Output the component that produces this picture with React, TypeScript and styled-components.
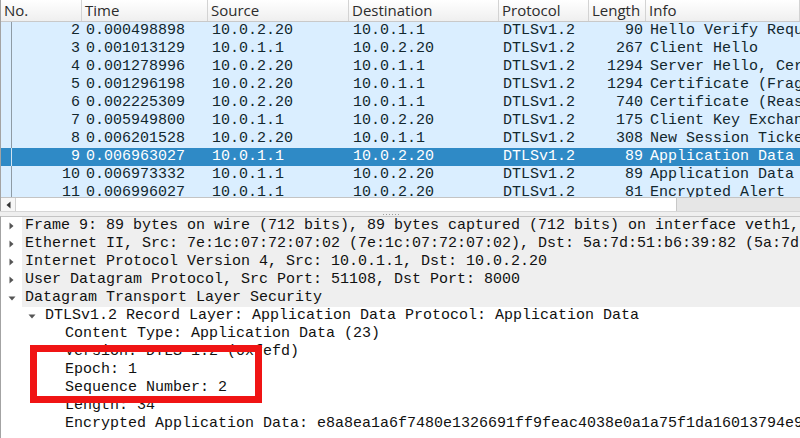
import { FC } from "react";
import { createGlobalStyle, styled } from "styled-components";

const MONO = `"Liberation Mono", "DejaVu Sans Mono", monospace`;
const SANS = `"Open Sans", "Noto Sans", sans-serif`;

interface Packet {
  no: number;
  time: string;
  src: string;
  dst: string;
  proto: string;
  len: number;
  info: string;
}

interface TreeItem {
  level: number;
  text: string;
  twisty?: "open" | "closed";
  shaded?: boolean;
}

const packets: Packet[] = [
  { no: 2, time: "0.000498898", src: "10.0.2.20", dst: "10.0.1.1", proto: "DTLSv1.2", len: 90, info: "Hello Verify Request" },
  { no: 3, time: "0.001013129", src: "10.0.1.1", dst: "10.0.2.20", proto: "DTLSv1.2", len: 267, info: "Client Hello" },
  { no: 4, time: "0.001278996", src: "10.0.2.20", dst: "10.0.1.1", proto: "DTLSv1.2", len: 1294, info: "Server Hello, Certificate" },
  { no: 5, time: "0.001296198", src: "10.0.2.20", dst: "10.0.1.1", proto: "DTLSv1.2", len: 1294, info: "Certificate (Fragment)" },
  { no: 6, time: "0.002225309", src: "10.0.2.20", dst: "10.0.1.1", proto: "DTLSv1.2", len: 740, info: "Certificate (Reassembled)" },
  { no: 7, time: "0.005949800", src: "10.0.1.1", dst: "10.0.2.20", proto: "DTLSv1.2", len: 175, info: "Client Key Exchange" },
  { no: 8, time: "0.006201528", src: "10.0.2.20", dst: "10.0.1.1", proto: "DTLSv1.2", len: 308, info: "New Session Ticket" },
  { no: 9, time: "0.006963027", src: "10.0.1.1", dst: "10.0.2.20", proto: "DTLSv1.2", len: 89, info: "Application Data" },
  { no: 10, time: "0.006973332", src: "10.0.1.1", dst: "10.0.2.20", proto: "DTLSv1.2", len: 89, info: "Application Data" },
  { no: 11, time: "0.006996027", src: "10.0.1.1", dst: "10.0.2.20", proto: "DTLSv1.2", len: 81, info: "Encrypted Alert" },
];

const tree: TreeItem[] = [
  { level: 0, twisty: "closed", shaded: true, text: "Frame 9: 89 bytes on wire (712 bits), 89 bytes captured (712 bits) on interface veth1, id 0" },
  { level: 0, twisty: "closed", shaded: true, text: "Ethernet II, Src: 7e:1c:07:72:07:02 (7e:1c:07:72:07:02), Dst: 5a:7d:51:b6:39:82 (5a:7d:51:b6:39:82)" },
  { level: 0, twisty: "closed", shaded: true, text: "Internet Protocol Version 4, Src: 10.0.1.1, Dst: 10.0.2.20" },
  { level: 0, twisty: "closed", shaded: true, text: "User Datagram Protocol, Src Port: 51108, Dst Port: 8000" },
  { level: 0, twisty: "open", shaded: true, text: "Datagram Transport Layer Security" },
  { level: 1, twisty: "open", text: "DTLSv1.2 Record Layer: Application Data Protocol: Application Data" },
  { level: 2, text: "Content Type: Application Data (23)" },
  { level: 2, text: "Version: DTLS 1.2 (0xfefd)" },
  { level: 2, text: "Epoch: 1" },
  { level: 2, text: "Sequence Number: 2" },
  { level: 2, text: "Length: 34" },
  { level: 2, text: "Encrypted Application Data: e8a8ea1a6f7480e1326691ff9feac4038e0a1a75f1da16013794e9a2b4" },
];

const SELECTED = 9;

const columns = ["No.", "Time", "Source", "Destination", "Protocol", "Length", "Info"];

const Twisty: FC<{ state?: "open" | "closed" }> = ({ state }) => (
  <TwistyBox>
    {state === "closed" && (
      <svg width="5" height="8" viewBox="0 0 5 8">
        <path d="M0.5 0.5 L4.5 4 L0.5 7.5 Z" fill="#555" />
      </svg>
    )}
    {state === "open" && (
      <svg width="8" height="5" viewBox="0 0 8 5">
        <path d="M0.5 0.5 L7.5 0.5 L4 4.5 Z" fill="#555" />
      </svg>
    )}
  </TwistyBox>
);

const App: FC = () => (
  <>
    <GlobalStyle />
    <Window>
      <PacketList>
        <HeaderRow>
          {columns.map((c) => (
            <HeaderCell key={c}>{c}</HeaderCell>
          ))}
        </HeaderRow>
        <ListBody>
          {packets.map((p) => {
            const sel = p.no === SELECTED;
            return (
              <PacketRow key={p.no} $selected={sel}>
                <NoCell $selected={sel}>{p.no}</NoCell>
                <Cell>{p.time}</Cell>
                <Cell>{p.src}</Cell>
                <Cell>{p.dst}</Cell>
                <Cell>{p.proto}</Cell>
                <LenCell>{p.len}</LenCell>
                <Cell>{p.info}</Cell>
              </PacketRow>
            );
          })}
        </ListBody>
        <HScroll>
          <ScrollArrow>
            <svg width="5" height="8" viewBox="0 0 5 8">
              <path d="M4.5 0.5 L0.5 4 L4.5 7.5 Z" fill="#333" />
            </svg>
          </ScrollArrow>
          <ScrollThumb />
          <ScrollTrough />
        </HScroll>
      </PacketList>
      <Splitter>
        <Grip />
      </Splitter>
      <DetailPane>
        {tree.map((t, i) => (
          <TreeRow key={i} $level={t.level}>
            <Twisty state={t.twisty} />
            <TreeLabel $shaded={t.shaded}>{t.text}</TreeLabel>
          </TreeRow>
        ))}
        <Highlight />
      </DetailPane>
    </Window>
  </>
);

export default App;

const GlobalStyle = createGlobalStyle`
  html, body {
    margin: 0;
    padding: 0;
    background: #ffffff;
    overflow: hidden;
  }
  body {
    width: 800px;
    height: 438px;
  }
`;

const Window = styled.div`
  width: 800px;
  height: 438px;
  display: flex;
  flex-direction: column;
  overflow: hidden;
  background: #ffffff;
`;

const PacketList = styled.div`
  display: flex;
  flex-direction: column;
  border-left: 1px solid #a3a3a3;
`;

const grid = `
  display: grid;
  grid-template-columns: 81px 126px 141px 150px 90px 57px 1fr;
`;

const HeaderRow = styled.div`
  ${grid}
  height: 21px;
  border-bottom: 1px solid #c9c9c9;
  background: linear-gradient(to bottom, #ffffff, #efefef);
`;

const HeaderCell = styled.div`
  font-family: ${SANS};
  font-size: 15px;
  line-height: 21px;
  color: #2c2c2c;
  padding-left: 3px;
  border-right: 1px solid #d3d3d3;
  white-space: nowrap;
  overflow: hidden;
  &:first-child {
    padding-left: 3px;
  }
  &:nth-child(n + 2) {
    padding-left: 3px;
  }
`;

const ListBody = styled.div`
  height: 175px;
  overflow: hidden;
  background: #ffffff;
`;

const PacketRow = styled.div<{ $selected?: boolean }>`
  ${grid}
  height: 18px;
  background: ${(p) => (p.$selected ? "#2f8ac6" : "#daeeff")};
  color: ${(p) => (p.$selected ? "#ffffff" : "#12272e")};
  font-family: ${MONO};
  font-size: 15px;
  line-height: 18px;
`;

const Cell = styled.div`
  padding-left: 4px;
  white-space: nowrap;
  overflow: hidden;
`;

const NoCell = styled.div<{ $selected?: boolean }>`
  text-align: right;
  padding-right: 2px;
  white-space: nowrap;
  background: linear-gradient(
    to right,
    transparent 10px,
    ${(p) => (p.$selected ? "#cfe3f2" : "#8e9ba5")} 10px,
    ${(p) => (p.$selected ? "#cfe3f2" : "#8e9ba5")} 11px,
    transparent 11px
  );
`;

const LenCell = styled.div`
  text-align: right;
  padding-right: 3px;
  white-space: nowrap;
`;

const HScroll = styled.div`
  display: flex;
  height: 13px;
  border-top: 1px solid #c4c4c4;
`;

const ScrollArrow = styled.div`
  width: 14px;
  display: flex;
  align-items: center;
  justify-content: center;
  border-right: 1px solid #d0d0d0;
  background: #f7f7f7;
`;

const ScrollThumb = styled.div`
  width: 660px;
  background: #ffffff;
`;

const ScrollTrough = styled.div`
  flex: 1;
  background: #e6e6e6;
  border-left: 1px solid #c8c8c8;
`;

const Splitter = styled.div`
  height: 4px;
  background: #efefef;
  display: flex;
  justify-content: center;
  align-items: center;
  border-top: 1px solid #d6d6d6;
`;

const Grip = styled.span`
  width: 18px;
  height: 1px;
  margin-left: -16px;
  background: repeating-linear-gradient(to right, #9c9c9c 0 1px, transparent 1px 3px);
`;

const DetailPane = styled.div`
  position: relative;
  flex: 1;
  border-top: 1px solid #c4c4c4;
  border-left: 1px solid #a3a3a3;
  background: #ffffff;
  overflow: hidden;
`;

const TreeRow = styled.div<{ $level: number }>`
  display: flex;
  height: 18px;
  padding-left: ${(p) => p.$level * 20}px;
`;

const TwistyBox = styled.div`
  width: 21px;
  flex: none;
  display: flex;
  align-items: center;
  justify-content: center;
`;

const TreeLabel = styled.div<{ $shaded?: boolean }>`
  flex: 1;
  padding-left: 3px;
  font-family: ${MONO};
  font-size: 15px;
  line-height: 18px;
  color: #111111;
  white-space: nowrap;
  overflow: hidden;
  background: ${(p) => (p.$shaded ? "#efefef" : "transparent")};
`;

const Highlight = styled.div`
  position: absolute;
  left: 29px;
  top: 128px;
  width: 232px;
  height: 58px;
  box-sizing: border-box;
  border: 7px solid #f01414;
  pointer-events: none;
`;
